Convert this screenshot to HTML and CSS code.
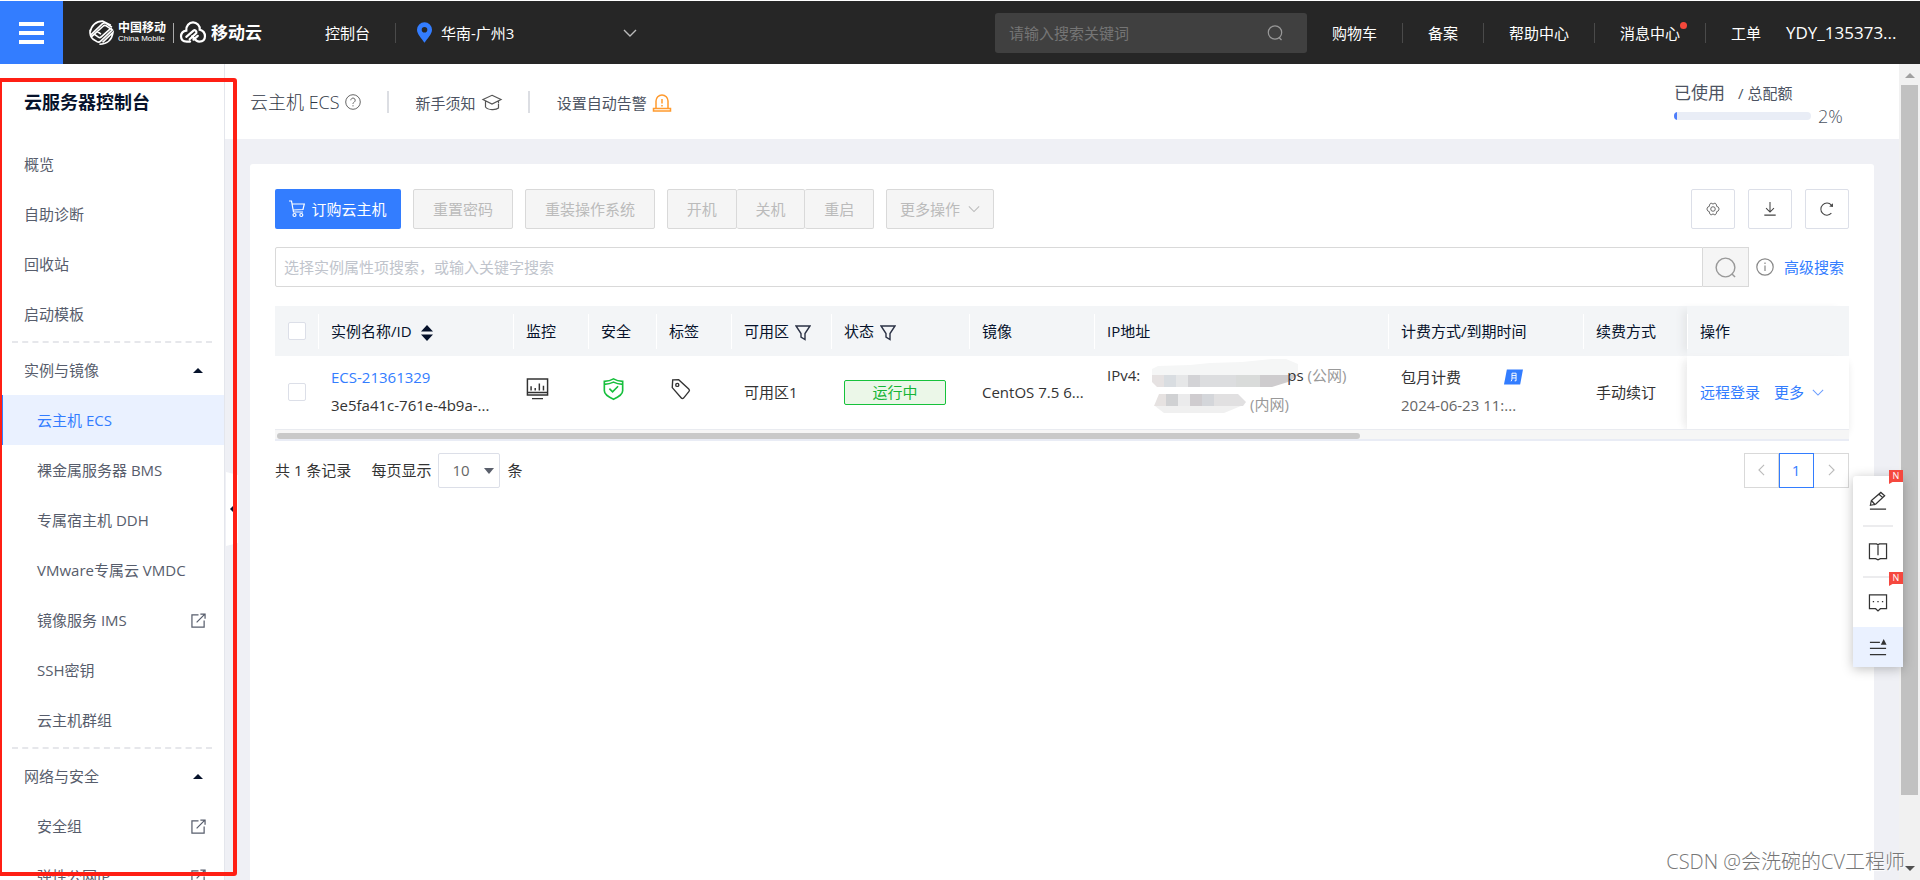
FILE: index.html
```html
<!DOCTYPE html>
<html lang="zh-CN">
<head>
<meta charset="utf-8">
<title>云服务器控制台</title>
<link rel="stylesheet" href="styles.css">
</head>
<body>
<header class="topbar">
  <button class="menu-btn" aria-label="菜单"><span></span><span></span><span></span></button>
  <a class="brand" href="#">
    <svg class="brand-cm" viewBox="0 0 24 24" fill="none" stroke="#fff" stroke-width="1.6" aria-hidden="true">
      <path d="M1 12C2 5 7 1 13 1L21 5M2 14L13 3.5C14 2.600 15 2.500 16 3L22 7M2 16.500L13.500 6C14.500 5 15.500 5 16.500 5.600L23 10M1 9.500C0.500 15 2 17 4 18.500L8 21C9.500 21.800 10.500 21 11.500 20L23 9M5 13.500L9 16.500C10 17.200 11 17 12 16L22 7M8 11L11.500 13.500M10 23.300C17 23 22 20 23 12L13 21.500"/>
    </svg>
    <span class="brand-names"><b>中国移动</b><small>China Mobile</small></span>
    <i class="brand-sep"></i>
    <svg class="brand-cloud" viewBox="0 0 28 24" fill="none" stroke="#fff" stroke-width="2.300" stroke-linecap="round" aria-hidden="true">
      <path d="M11 21.500H7.500C4 21.500 1.500 19.500 1.500 16S4 10.500 7 10C6.500 5 10 1.500 14 1.500S21.500 5 21 9C24.500 10 26.500 12.500 26.500 16C26.500 19.500 24 21.500 20.500 21.500C17 21.500 15.500 18.500 13 16M7 16.500L14.500 10C16 9 18 10.500 17.500 12.500L10.500 19M14.500 19.500L19 15.500"/>
    </svg>
    <strong>移动云</strong>
  </a>
  <a class="console-link" href="#">控制台</a>
  <button class="region">
    <svg class="pin" viewBox="0 0 16 22" aria-hidden="true"><path fill="#337dff" fill-rule="evenodd" d="M8 0a8 8 0 0 1 8 8c0 5-5 9-8 14C5 17 0 13 0 8a8 8 0 0 1 8-8zm0 5a3 3 0 1 0 0 6 3 3 0 0 0 0-6z"/></svg>
    <span>华南-广州3</span>
    <svg class="caret" viewBox="0 0 14 8" fill="none" stroke="#bbb" stroke-width="1.400" aria-hidden="true"><path d="M1 1l6 6 6-6"/></svg>
  </button>
  <div class="top-search">
    <input type="text" placeholder="请输入搜索关键词" aria-label="请输入搜索关键词">
    <svg viewBox="0 0 16 16" fill="none" stroke="#999" stroke-width="1.200" aria-hidden="true"><circle cx="8" cy="7.500" r="6.700"/><path d="M12 12.500l2.500 2.500"/></svg>
  </div>
  <nav class="top-nav">
    <a href="#">购物车</a><a href="#">备案</a><a href="#">帮助中心</a><a href="#">消息中心<i class="dot"></i></a><a href="#">工单</a>
  </nav>
  <a class="user" href="#">YDY_135373...</a>
</header>

<div class="body">
  <aside class="sidebar">
    <h1>云服务器控制台</h1>
    <nav>
      <a href="#">概览</a>
      <a href="#">自助诊断</a>
      <a href="#">回收站</a>
      <a href="#">启动模板</a>
      <hr>
      <button class="group">实例与镜像<i class="tri-up"></i></button>
      <a class="sub active" href="#">云主机 ECS</a>
      <a class="sub" href="#">裸金属服务器 BMS</a>
      <a class="sub" href="#">专属宿主机 DDH</a>
      <a class="sub" href="#">VMware专属云 VMDC</a>
      <a class="sub" href="#">镜像服务 IMS<svg class="ext" viewBox="0 0 16 16"><use href="#i-ext"/></svg></a>
      <a class="sub" href="#">SSH密钥</a>
      <a class="sub" href="#">云主机群组</a>
      <hr>
      <button class="group">网络与安全<i class="tri-up"></i></button>
      <a class="sub" href="#">安全组<svg class="ext" viewBox="0 0 16 16"><use href="#i-ext"/></svg></a>
      <a class="sub" href="#">弹性公网IP<svg class="ext" viewBox="0 0 16 16"><use href="#i-ext"/></svg></a>
    </nav>
  </aside>
  <button class="collapse" aria-label="收起"><svg viewBox="0 0 12 74" aria-hidden="true"><path fill="#fff" d="M0 0l12 3v68L0 74z"/><path fill="#0b1733" d="M4 37l4-4v8z"/></svg></button>

  <main class="main">
    <div class="page-head">
      <h2>云主机 ECS</h2>
      <svg class="help" viewBox="0 0 16 16" fill="none" stroke="#666" aria-hidden="true"><circle cx="8" cy="8" r="7.300"/><path d="M5.800 6.300a2.200 2.200 0 1 1 3.400 1.800C8.300 8.700 8 9 8 10M8 11.200v1.200"/></svg>
      <i class="bar"></i>
      <a href="#">新手须知
        <svg class="cap" viewBox="0 0 20 16" fill="none" stroke="#555" stroke-width="1.200" aria-hidden="true"><path d="M10 .8l9 4.200-9 4.500L1 5zM3.500 6.500v6C6 15.800 14 15.800 16.500 13.500V9M16.500 6.500v2"/></svg></a>
      <i class="bar"></i>
      <a href="#">设置自动告警
        <svg class="bell" viewBox="0 0 18 18" fill="none" stroke="#ff9a2e" stroke-width="1.500" aria-hidden="true"><path d="M3 14.500V7a6 6 0 0 1 12 0v7.500M.5 14.500h17v2.500H.5zM9 5v4.500M9 11v1.500"/></svg></a>
      <div class="quota">
        <p><b>已使用</b><span>/ 总配额</span></p>
        <div class="quota-row"><div class="meter"><i style="width:2%"></i></div><span>2%</span></div>
      </div>
    </div>

    <section class="card">
      <div class="tools">
        <button class="primary"><svg viewBox="0 0 16 18" fill="none" stroke="#fff" stroke-width="1.200" aria-hidden="true"><path d="M0 1h2.500l2 11H14M3 4h12.300L14 9.500 4 10"/><circle cx="5.500" cy="15" r="1.500"/><circle cx="12.300" cy="15" r="1.500"/></svg>订购云主机</button>
        <button class="off w100" disabled>重置密码</button>
        <button class="off w130" disabled>重装操作系统</button>
        <div class="joined"><button class="off" disabled>开机</button><button class="off" disabled>关机</button><button class="off" disabled>重启</button></div>
        <button class="off more" disabled>更多操作<svg viewBox="0 0 14 8" fill="none" stroke="#bbb" stroke-width="1.200" aria-hidden="true"><path d="M1 1l6 6 6-6"/></svg></button>
        <div class="icons">
          <button aria-label="设置"><svg viewBox="0 0 16 16" fill="none" stroke="#555" aria-hidden="true"><path d="M5.200 1.500h1.500L8 2.500l1.300-1h1.500l1.300 2-.1 1.300 2 1L15 8l-1 2.200-2 1 .1 1.300-1.300 2H9.300L8 13.500l-1.300 1H5.200l-1.300-2 .1-1.300-2-1L1 8l1-2.200 2-1-.1-1.300z"/><circle cx="8" cy="8" r="2.600"/></svg></button>
          <button aria-label="下载"><svg viewBox="0 0 16 16" fill="none" stroke="#444" stroke-width="1.200" aria-hidden="true"><path d="M8 0v11.500M3.500 7L8 11.500 12.500 7M1.500 15h13"/></svg></button>
          <button aria-label="刷新"><svg viewBox="0 0 16 16" fill="none" stroke="#444" stroke-width="1.200" aria-hidden="true"><path d="M13 12.800A6.900 6.900 0 1 1 13 3.500"/><path fill="#444" stroke="none" d="M14.800 1.500v4.300l-4.300-.8z"/></svg></button>
        </div>
      </div>

      <div class="filter">
        <input type="text" placeholder="选择实例属性项搜索，或输入关键字搜索" aria-label="搜索实例">
        <button aria-label="搜索"><svg viewBox="0 0 22 22" fill="none" stroke="#999" stroke-width="1.500" aria-hidden="true"><circle cx="11" cy="11" r="9.800"/><path d="M17.500 17.500l3.500 3.500"/></svg></button>
        <svg class="info" viewBox="0 0 18 18" fill="none" stroke="#888" stroke-width="1.200" aria-hidden="true"><circle cx="9" cy="9" r="8.200"/><path d="M9 7.500v5.500M9 4.500v1.500"/></svg>
        <a href="#">高级搜索</a>
      </div>

      <table class="grid">
        <colgroup><col class="c43"><col class="c195"><col class="c75"><col class="c68"><col class="c75"><col class="c100"><col class="c138"><col class="c125"><col><col class="c195"><col class="c104"><col class="c162"></colgroup>
        <thead><tr>
          <th class="tick"><input type="checkbox" aria-label="全选"></th>
          <th>实例名称/ID<svg class="sort" viewBox="0 0 12 16" fill="#06122b" aria-hidden="true"><path d="M6 0l6 6.500H0zM6 16l6-6.500H0z"/></svg></th>
          <th>监控</th><th>安全</th><th>标签</th>
          <th>可用区<svg class="fun" viewBox="0 0 16 16"><use href="#i-fun"/></svg></th>
          <th>状态<svg class="fun" viewBox="0 0 16 16"><use href="#i-fun"/></svg></th>
          <th>镜像</th><th>IP地址</th><th>计费方式/到期时间</th><th>续费方式</th><th class="fixed">操作</th>
        </tr></thead>
        <tbody><tr>
          <td class="tick"><input type="checkbox" aria-label="选择 ECS-21361329"></td>
          <td><div class="two"><a href="#">ECS-21361329</a><span>3e5fa41c-761e-4b9a-...</span></div></td>
          <td><svg class="ic24" viewBox="0 0 24 24" fill="none" stroke="#333" stroke-width="1.600" aria-hidden="true"><path d="M1 1h22v17.500H1zM1 15.800h22M6 22.500h12M5 9v4.500M9.500 11v2.500M14 6v7.500M18.500 8.500v5"/></svg></td>
          <td><svg class="ic24 shield" viewBox="0 0 24 24" fill="none" stroke="#16bf3c" stroke-width="1.800" aria-hidden="true"><path d="M12 1c3 1.800 6 2.500 10 2.700V14c0 4-5 7-10 9.200C7 21 2 18 2 14V3.700C6 3.500 9 2.800 12 1zM2 7c4-.3 7-1 10-2.500C15 6 18 6.700 22 7M7.500 11.500L11 15l6-6"/></svg></td>
          <td><svg class="ic24" viewBox="0 0 24 24" fill="none" stroke="#333" stroke-width="1.500" aria-hidden="true"><path d="M3.500 2L10 1.800 21 12c1 1 1 1.800.3 2.600l-6 7.300c-.8.8-1.700.8-2.400 0L3 10.500z"/><circle cx="8.500" cy="7.500" r="1.700"/></svg></td>
          <td>可用区1</td>
          <td><span class="tag">运行中</span></td>
          <td>CentOS 7.5 6...</td>
          <td><div class="ips">
            <p><span>IPv4:</span><svg class="mask-a" viewBox="0 0 148 32" aria-hidden="true"><path fill="#f5f6f6" d="M0 10l6-3 32-1 20-2 32-1 30-3h14l12 5v11H0z"/><path fill="#e6e2e2" d="M0 16h12v12H5l-5-5z"/><path fill="#d9dde1" d="M12 16h12v12H12z"/><path fill="#e6e7e8" d="M24 16h12v12H24z"/><path fill="#d3d3d6" d="M36 16h12v12H36z"/><path fill="#dcdddf" d="M48 16h36v12H48z"/><path fill="#d9dbda" d="M84 16h24v12H84z"/><path fill="#ceccce" d="M108 16h38l-10 7-16 5h-12z"/></svg><span class="ps">ps</span><em>(公网)</em></p>
            <p><svg class="mask-b" viewBox="0 0 94 22" aria-hidden="true"><path fill="#e6e2e1" d="M5 1h7v12H0z"/><path fill="#d0d1d3" d="M12 1h12v12H12z"/><path fill="#ebebec" d="M24 1h12v12H24z"/><path fill="#cfcccf" d="M36 1h12v12H36z"/><path fill="#d4d6da" d="M48 1h12v12H48z"/><path fill="#e1e0e1" d="M60 1h24l8 8-3 4H60z"/><path fill="#f0f0f0" d="M1 13h86l-17 7H10z"/></svg><em>(内网)</em></p>
          </div></td>
          <td><div class="two"><span class="bill">包月计费<svg viewBox="0 0 20 16" aria-hidden="true"><path fill="#337dff" d="M3 0h17l-3 16H0z"/><path fill="none" stroke="#fff" d="M7.500 12.500c.8-1 .9-2 .9-3.500V4h4.300v8h-1.500M8.400 6.500h4.300M8.400 9h4.300"/></svg></span><span class="date">2024-06-23 11:...</span></div></td>
          <td>手动续订</td>
          <td class="fixed"><div class="acts"><a href="#">远程登录</a><a href="#">更多<svg viewBox="0 0 14 8" fill="none" stroke="#6b9dff" stroke-width="1.200" aria-hidden="true"><path d="M1 1l6 6 6-6"/></svg></a></div></td>
        </tr></tbody>
      </table>
      <div class="hscroll"><i></i></div>

      <div class="pager">
        <span>共 1 条记录</span>
        <label for="size">每页显示</label>
        <div class="select"><select id="size"><option>10</option></select></div>
        <span class="unit">条</span>
        <div class="pages">
          <button aria-label="上一页"><svg viewBox="0 0 8 14"><path d="M7 1L1 7l6 6"/></svg></button><button class="on">1</button><button aria-label="下一页"><svg viewBox="0 0 8 14"><path d="M1 1l6 6-6 6"/></svg></button>
        </div>
      </div>
    </section>
  </main>
  <div class="vscroll"><i class="up"></i><i class="thumb"></i><i class="down"></i></div>
</div>

<div class="dock">
  <button aria-label="反馈"><svg viewBox="0 0 20 20"><path d="M2 15l1-5 10-8.500 4 3.500-9.500 9zM11 3.500l4 3.500M3.500 10.500l3.500 4M1.500 19h17"/></svg><i class="n">N</i></button>
  <hr>
  <button aria-label="文档"><svg viewBox="0 0 20 20"><path d="M1 2h7.500L10 3l1.500-1H19v15.500h-6.500l-2.500 1.300-2.500-1.300H1zM10 3v11"/></svg></button>
  <hr>
  <button aria-label="消息"><svg viewBox="0 0 20 20"><path d="M1 2h18v14.500h-6.500L10 18.800l-2.500-2.300H1zM4.500 9h1.400M9.300 9h1.400M14.100 9h1.400"/></svg><i class="n">N</i></button>
  <button class="fold" aria-label="收起"><svg viewBox="0 0 20 20"><path d="M1.500 4.500H12M1.500 11h17M1.500 17.500h17"/><path class="solid" d="M16 1l3 6h-6z"/></svg></button>
</div>
<div class="marker" aria-hidden="true"></div>
<div class="watermark">CSDN @会洗碗的CV工程师</div>

<svg class="defs" aria-hidden="true">
  <symbol id="i-ext" viewBox="0 0 16 16"><path fill="none" stroke="#575d6c" stroke-width="1.300" d="M8 2H1v13h13V8M6 10l8.500-8.500M10 1.200h5V6"/></symbol>
  <symbol id="i-fun" viewBox="0 0 16 16"><path fill="none" stroke="#2b3245" stroke-width="1.400" d="M1 1h14L10 8.500v6L6 12V8.500z"/></symbol>
</svg>
</body>
</html>
```
FILE: styles.css
```css
* { box-sizing: border-box; margin: 0; padding: 0; }
body {
  height: 100vh; display: flex; flex-direction: column; overflow: hidden;
  padding-top: 1px; position: relative; background: #fff; color: #333;
  font: 400 15px/20px "Open Sans", "Noto Sans CJK SC", sans-serif;
}
button, input, select { font: inherit; color: inherit; border: 0; background: none; outline: 0; }
a { color: inherit; text-decoration: none; }
svg { display: block; flex: none; overflow: visible; }
i, em { font-style: normal; }
.defs { position: absolute; width: 0; height: 0; }

/* top bar */
.topbar { flex: none; height: 63px; display: flex; align-items: center; background: #262626; color: #fff; }
.menu-btn { width: 63px; height: 63px; background: #337dff; display: flex; flex-direction: column; align-items: center; justify-content: center; gap: 5px; }
.menu-btn span { width: 25px; height: 4px; background: #fff; }
.brand { display: flex; align-items: center; margin-left: 26px; width: 236px; }
.brand-cm { width: 25px; height: 25px; }
.brand-names { display: flex; flex-direction: column; margin-left: 4px; width: 50px; }
.brand-names b { font-size: 12px; line-height: 13px; font-weight: 700; }
.brand-names small { font: 8px/10px "Liberation Sans", sans-serif; white-space: nowrap; }
.brand-sep { width: 1px; height: 20px; background: #aaa; margin: 0 5px; }
.brand-cloud { width: 28px; height: 23px; }
.brand strong { font-size: 17px; font-weight: 700; margin-left: 4px; }
.console-link { padding-right: 25px; border-right: 1px solid #4a4a4a; }
.region { display: flex; align-items: center; margin-left: 21px; width: 220px; }
.region span { margin-left: 9px; }
.pin { width: 15px; height: 21px; }
.caret { width: 14px; height: 8px; margin-left: auto; }
.top-search { margin-left: auto; width: 312px; height: 40px; display: flex; align-items: center; background: #404040; border-radius: 3px; padding: 0 24px 0 14px; }
.top-search input { flex: 1; min-width: 0; }
.top-search input::placeholder { color: #757575; }
.top-search svg { width: 16px; height: 16px; }
.top-nav { display: flex; }
.top-nav a { position: relative; padding: 0 25px; border-right: 1px solid #4a4a4a; }
.top-nav a:last-child { border: 0; }
.dot { position: absolute; top: -1px; right: 18px; width: 7px; height: 7px; border-radius: 50%; background: #f5483b; }
.user { width: 134px; font-size: 17px; white-space: nowrap; }

/* layout */
.body { flex: 1; min-height: 0; display: flex; position: relative; }
.sidebar { flex: none; width: 225px; border-right: 1px solid #e4e6ec; overflow: hidden; color: #575d6c; }
.sidebar h1 { font-size: 18px; line-height: 26px; font-weight: 700; color: #06122b; padding: 25px 24px 24px; white-space: nowrap; }
.sidebar nav a, .group { display: flex; align-items: center; justify-content: space-between; width: 100%; height: 50px; padding: 0 18px 0 24px; text-align: left; }
.sidebar nav .sub { padding-left: 37px; }
.sidebar nav .active { background: #eaf1ff; color: #337dff; border-left: 3px solid #337dff; padding-left: 34px; }
.sidebar hr { border: 0; border-top: 2px dashed #e6e7eb; margin: 2px 12px; }
.tri-up { border: 5px solid transparent; border-top: 0; border-bottom-color: #06122b; margin-right: 3px; }
.ext { width: 15px; height: 15px; }
.collapse { position: absolute; left: 226px; top: 408px; }
.collapse svg { width: 12px; height: 74px; }
.main { flex: 1; min-width: 0; display: flex; flex-direction: column; background: #eff0f5; }
.vscroll { flex: none; width: 21px; padding: 9px 2px; background: #f1f1f1; display: flex; flex-direction: column; align-items: center; }
.up { border: 5px solid transparent; border-top: 0; border-bottom-color: #a0a0a0; margin-bottom: 7px; }
.thumb { width: 17px; height: 89%; background: #c1c1c1; }
.down { border: 5px solid transparent; border-bottom: 0; border-top-color: #505050; margin-top: auto; }

/* page head */
.page-head { flex: none; height: 75px; display: flex; align-items: center; background: #fff; padding: 0 55px 0 25px; color: #4c5362; }
.page-head h2 { font-size: 18px; font-weight: 300; color: #2f3644; }
.help { width: 16px; height: 16px; margin-left: 5px; }
.bar { width: 2px; height: 22px; background: #dcdee3; margin: 0 27px 0 26px; }
.page-head a { display: flex; align-items: center; gap: 6px; padding-top: 2px; }
.cap { width: 20px; height: 17px; }
.bell { width: 18px; height: 18px; }
.quota { margin-left: auto; width: 170px; padding-top: 5px; }
.quota p { display: flex; align-items: center; line-height: 24px; }
.quota b { font-size: 17px; font-weight: 400; margin-right: 13px; }
.quota-row { display: flex; align-items: center; gap: 7px; font-size: 18px; font-weight: 300; line-height: 22px; }
.meter { width: 137px; height: 8px; border-radius: 4px; background: #e9edf6; overflow: hidden; }
.meter i { display: block; height: 100%; background: #4d7dfa; }

/* card */
.card { flex: 1; margin: 25px 25px 0; padding: 25px 25px 0; background: #fff; border-radius: 3px 3px 0 0; }
.tools { display: flex; gap: 12px; }
.tools button { height: 40px; border-radius: 2px; white-space: nowrap; }
.primary { width: 126px; background: #337dff; color: #fff; display: flex; align-items: center; justify-content: center; gap: 6px; }
.primary svg { width: 16px; height: 18px; }
.off { background: #f5f5f5; border: 1px solid #d9d9d9; color: #bbb; }
.w100 { width: 100px; }
.w130 { width: 130px; }
.joined { display: flex; width: 207px; }
.joined .off { flex: 1; }
.joined .off + .off { border-left: 0; }
.more { width: 108px; display: flex; align-items: center; justify-content: center; gap: 8px; }
.more svg { width: 12px; height: 8px; }
.icons { margin-left: auto; display: flex; gap: 13px; }
.icons button { width: 44px; border: 1px solid #dcdfe8; display: grid; place-items: center; }
.icons svg { width: 14px; height: 14px; }
.filter { display: flex; align-items: center; margin-top: 18px; height: 40px; padding-right: 5px; }
.filter input { flex: 1; min-width: 0; height: 40px; border: 1px solid #d9d9d9; border-radius: 2px 0 0 2px; padding: 0 8px; }
.filter input::placeholder { color: #c0c4cc; }
.filter button { width: 46px; height: 40px; border: 1px solid #d9d9d9; border-left: 0; background: #f5f5f5; display: grid; place-items: center; }
.filter button svg { width: 21px; height: 21px; }
.info { width: 18px; height: 18px; margin: 0 10px 0 7px; }
.filter a, .two a, .acts { color: #337dff; }

/* table */
.grid { width: 100%; margin-top: 19px; border-collapse: collapse; table-layout: fixed; }
.c43 { width: 43px; } .c68 { width: 68px; } .c75 { width: 75px; } .c100 { width: 100px; } .c104 { width: 104px; }
.c125 { width: 125px; } .c138 { width: 138px; } .c162 { width: 162px; } .c195 { width: 195px; }
th, td { text-align: left; padding: 0 0 0 13px; white-space: nowrap; vertical-align: middle; }
th { height: 50px; background: linear-gradient(#fff, #fff) left center / 1px 35px no-repeat #f3f5f7; font-weight: 400; color: #06122b; }
td { height: 73px; border-bottom: 1px solid #e9ebf0; }
th.tick { background: #f3f5f7; }
th.fixed { box-shadow: -8px 0 8px -4px #e4e6e8; }
td.fixed { box-shadow: -8px 0 8px -4px #eee, 0 5px 8px -2px #ddd; background: #fff; }
input[type=checkbox] { appearance: none; display: block; width: 18px; height: 18px; border: 1px solid #dcdfe8; border-radius: 2px; background: #fff; }
.sort, .fun { display: inline-block; vertical-align: middle; margin-left: 9px; }
.sort { width: 12px; height: 16px; }
.fun { width: 16px; height: 16px; margin-left: 6px; }
.two { display: flex; flex-direction: column; gap: 8px; padding-bottom: 2px; }
.ic24 { width: 23px; height: 22px; margin-top: -6px; }
.shield { margin-left: 1px; }
.tag { display: block; width: 102px; height: 25px; line-height: 23px; text-align: center; border: 1px solid #16c23b; border-radius: 2px; background: #ebf7e8; color: #16b436; }
.ips { display: flex; flex-direction: column; gap: 9px; padding-bottom: 5px; }
.ips p { display: flex; align-items: center; height: 20px; }
.ips em { color: #999; }
.mask-a { width: 148px; height: 32px; margin: 0 -13px 0 12px; }
.ps { margin-right: 4px; }
.mask-b { width: 94px; height: 22px; margin: 0 2px 0 47px; }
.bill { display: flex; align-items: center; gap: 43px; }
.bill svg { width: 19px; height: 16px; }
.date { color: #666; }
.acts, .acts a { display: flex; align-items: center; }
.acts { gap: 14px; }
.acts a { gap: 8px; }
.acts svg { width: 12px; height: 7px; }
.hscroll { height: 11px; padding: 3px 2px 0; background: #f6f6f6; border-bottom: 2px solid #e9ecf5; }
.hscroll i { display: block; width: 69%; height: 6px; border-radius: 3px; background: #c9c9c9; }

/* pagination */
.pager { display: flex; align-items: center; margin-top: 12px; height: 35px; }
.pager label { margin: 0 7px 0 20px; }
.select { position: relative; }
.select::after { content: ""; position: absolute; right: 6px; top: 15px; border: 5px solid transparent; border-top: 6px solid #5a5f6b; border-bottom: 0; }
.select select { appearance: none; width: 62px; height: 35px; border: 1px solid #dcdfe8; border-radius: 2px; padding: 0 13px; color: #666; }
.unit { margin-left: 7px; }
.pages { margin-left: auto; display: flex; }
.pages button { width: 35px; height: 35px; border: 1px solid #d9d9d9; display: grid; place-items: center; }
.pages button + button { border-left: 0; }
.pages .on { outline: 1px solid #337dff; outline-offset: -1px; color: #337dff; z-index: 1; }
.pages svg { width: 7px; height: 12px; fill: none; stroke: #bbb; stroke-width: 1.3; }

/* floating dock and overlays */
.dock { position: absolute; right: 17px; top: 476px; width: 50px; background: #fff; border-radius: 3px 3px 0 0; box-shadow: 0 2px 12px rgba(0, 0, 0, .25); }
.dock button { position: relative; display: grid; place-items: center; width: 50px; height: 49px; }
.dock hr { border: 0; border-top: 2px solid #ececee; margin: 0 10px; }
.dock svg { width: 20px; height: 19px; fill: none; stroke: #333; stroke-width: 1.3; }
.dock .solid { fill: #333; stroke: none; }
.dock .fold { height: 40px; background: #eaf1ff; }
.n { position: absolute; right: 0; top: -6px; width: 14px; height: 14px; background: #f5483f; color: #fff; font-size: 9px; line-height: 12px; text-align: center; clip-path: polygon(0 0, 100% 0, 100% 85%, 25% 85%, 0 100%); }
.marker { position: absolute; left: -2px; top: 78px; bottom: 4px; width: 239px; border: 4px solid #ff1f14; border-radius: 3px; pointer-events: none; }
.watermark { position: absolute; right: 15px; bottom: 5px; font-size: 20px; font-weight: 300; line-height: 26px; color: #777; text-shadow: 1px 1px 1px #fff; }
```
